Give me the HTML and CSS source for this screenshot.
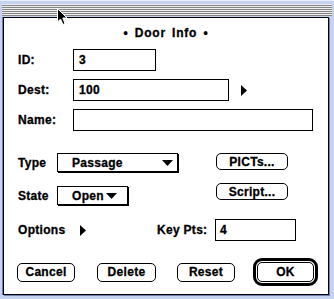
FILE: index.html
```html
<!DOCTYPE html>
<html>
<head>
<meta charset="utf-8">
<link rel="stylesheet" href="styles.css">
</head>
<body>
<div class="window">
  <div class="titlebar"><div class="stripes"></div></div>
  <div class="dialog">
    <div class="title">• Door Info •</div>
    <div class="fields">
      <div class="row"><span class="label">ID:</span><div class="field w-id">3</div></div>
      <div class="row"><span class="label">Dest:</span><div class="field w-dest">100</div>
        <svg class="tri-r dest-tri" width="6" height="11" viewBox="0 0 6 11"><polygon points="0,0 6,5.5 0,11" fill="#000"/></svg></div>
      <div class="row"><span class="label">Name:</span><div class="field w-name"></div></div>
    </div>
    <div class="mid">
      <div class="mid-left">
        <div class="row2"><span class="label2">Type</span>
          <div class="popup w-type"><span>Passage</span><svg width="11" height="6" viewBox="0 0 11 6"><polygon points="0,0 11,0 5.5,6" fill="#000"/></svg></div>
        </div>
        <div class="row2"><span class="label2">State</span>
          <div class="popup w-state"><span>Open</span><svg width="11" height="6" viewBox="0 0 11 6"><polygon points="0,0 11,0 5.5,6" fill="#000"/></svg></div>
        </div>
      </div>
      <div class="mid-right">
        <div class="btn btn-side">PICTs...</div>
        <div class="btn btn-side">Script...</div>
      </div>
    </div>
    <div class="opts">
      <span class="opt-label">Options</span>
      <svg class="tri-r" width="6" height="11" viewBox="0 0 6 11"><polygon points="0,0 6,5.5 0,11" fill="#000"/></svg>
      <span class="key-label">Key Pts:</span>
      <div class="field w-key">4</div>
    </div>
    <div class="buttons">
      <div class="btn b-cancel">Cancel</div>
      <div class="btn b-delete">Delete</div>
      <div class="btn b-reset">Reset</div>
      <div class="ok-ring"><div class="btn b-ok">OK</div></div>
    </div>
  </div>
  <svg class="cursor" width="13" height="19" viewBox="0 0 13 19"><path d="M1.5 1.5 V15 L4.5 12 L7 17.5 L9 16.5 L6.8 11 H11 Z" fill="#000" stroke="#fff" stroke-width="1"/></svg>
</div>
</body>
</html>
```

FILE: styles.css
```css
body {
  margin: 0;
}
.window {
  position: relative;
  width: 334px;
  height: 299px;
  background: #c6d3f0;
  font: bold 12px "Liberation Sans", Arial, sans-serif;
  color: #000;
  letter-spacing: 0.3px;
  -webkit-text-stroke: 0.3px #000;
  overflow: hidden;
}
.titlebar {
  height: 17px;
  padding: 3px 2px 0 2px;
  box-sizing: border-box;
  border-top: 1px solid #e6eeff;
}
.stripes {
  height: 12px;
  background: repeating-linear-gradient(to bottom, #eeeeee 0 1px, #858585 1px 2px);
}
.dialog {
  margin-left: 3px;
  width: 326px;
  height: 278px;
  box-sizing: border-box;
  border: 1px solid #000;
  background: #fff;
  box-shadow: 1px 1px 0 #6f80b4, -1px 0 0 #6f80b4;
  padding-top: 7px;
}
.title {
  text-align: center;
  height: 16px;
  line-height: 16px;
  letter-spacing: 0.8px;
  word-spacing: 2px;
}
.fields {
  margin-top: 8px;
  padding-left: 14px;
  display: flex;
  flex-direction: column;
  gap: 8px;
}
.row {
  display: flex;
  align-items: center;
  height: 22px;
}
.label {
  width: 55px;
}
.field {
  height: 22px;
  box-sizing: border-box;
  border: 1px solid #000;
  padding-left: 5px;
  line-height: 20px;
}
.w-id { width: 83px; }
.w-dest { width: 156px; }
.w-name { width: 240px; }
.w-key { width: 81px; padding-left: 4px; }
.dest-tri { margin-left: 12px; }
.mid {
  margin-top: 22px;
  display: flex;
}
.mid-left {
  padding-left: 14px;
  display: flex;
  flex-direction: column;
  gap: 14px;
}
.row2 {
  display: flex;
  align-items: center;
  height: 19px;
}
.label2 {
  width: 39px;
}
.popup {
  height: 19px;
  box-sizing: border-box;
  border: 1px solid #000;
  box-shadow: 1px 1px 0 #000;
  display: flex;
  align-items: center;
  justify-content: space-between;
  padding-left: 14px;
}
.w-type { width: 121px; padding-right: 4px; }
.w-state { width: 71px; padding-right: 10px; }
.mid-right {
  margin-left: 38px;
  display: flex;
  flex-direction: column;
  gap: 13px;
}
.btn {
  box-sizing: border-box;
  border: 1px solid #000;
  border-radius: 5px;
  display: flex;
  align-items: center;
  justify-content: center;
  height: 19px;
}
.btn-side {
  width: 72px;
  height: 17px;
}
.opts {
  margin-top: 14px;
  display: flex;
  align-items: center;
  height: 22px;
  padding-left: 14px;
}
.opt-label {
  width: 62px;
}
.key-label {
  margin-left: 71px;
  width: 58px;
}
.buttons {
  margin-top: 17px;
  display: flex;
  align-items: center;
  height: 28px;
  padding-left: 13px;
}
.b-cancel { width: 58px; }
.b-delete { width: 59px; margin-left: 22px; }
.b-reset { width: 58px; margin-left: 21px; }
.ok-ring {
  margin-left: 18px;
  width: 65px;
  height: 28px;
  box-sizing: border-box;
  border: 3px solid #000;
  border-radius: 9px;
  padding: 1px;
}
.b-ok {
  width: 100%;
  height: 100%;
}
.cursor {
  position: absolute;
  left: 56px;
  top: 7px;
  -webkit-text-stroke: 0;
}
```
